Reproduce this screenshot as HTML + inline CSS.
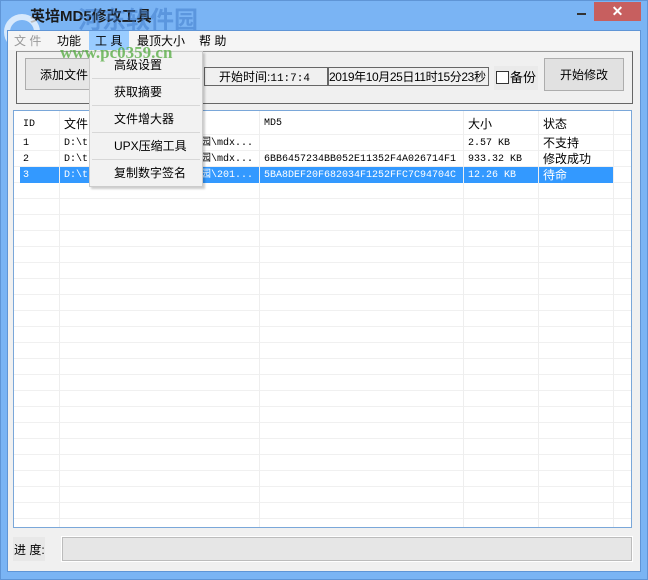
<!DOCTYPE html>
<html><head><meta charset="utf-8"><style>
*{margin:0;padding:0;box-sizing:border-box}
body{width:648px;height:580px;background:#7ab4f4;position:relative;overflow:hidden;font-family:"Liberation Sans","Noto Sans CJK SC",sans-serif;font-size:12px;color:#000;white-space:nowrap}
.a{position:absolute;line-height:14px}
.mono{font-family:"Liberation Mono","Noto Sans CJK SC",monospace;font-size:10px}
</style></head><body>
<div class="a" style="left:0;top:0;width:648px;height:580px;border:1px solid #5f95d6"></div>
<div class="a" style="left:30px;top:10px;font-size:15px;font-weight:bold;color:#1a1a1a">英培MD5修改工具</div>
<div class="a" style="left:78px;top:8px;font-size:24px;line-height:26px;font-weight:bold;color:rgba(60,120,200,0.5)">河东软件园</div>
<div class="a" style="left:4px;top:14px;width:36px;height:36px;border-radius:50%;border:6px solid rgba(255,255,255,0.7)"></div>
<div class="a" style="left:594px;top:2px;width:47px;height:19px;background:#c75f5f;color:#fff;text-align:center;font-size:14px;line-height:19px;font-weight:bold">✕</div>
<div class="a" style="left:577px;top:13px;width:9px;height:2px;background:#333"></div>
<!-- client -->
<div class="a" style="left:7px;top:30px;width:634px;height:542px;background:#f0f0f0;border:1px solid #5f95d6"></div>
<div class="a" style="left:8px;top:31px;width:632px;height:19px;background:#f5f5f5"></div>
<div class="a" style="left:14px;top:34px;color:#999">文 件</div>
<div class="a" style="left:57px;top:34px">功能</div>
<div class="a" style="left:89px;top:31px;width:40px;height:19px;background:#99ccff"></div>
<div class="a" style="left:95px;top:34px">工 具</div>
<div class="a" style="left:137px;top:34px">最顶大小</div>
<div class="a" style="left:199px;top:34px">帮 助</div>
<!-- group -->
<div class="a" style="left:16px;top:51px;width:617px;height:53px;border:1px solid #666;border-top-color:#999"></div>
<div class="a" style="left:25px;top:58px;width:66px;height:32px;border:1px solid #adadad;background:#e6e6e6;padding:9px 0 0 14px">添加文件</div>
<div class="a" style="left:204px;top:67px;width:124px;height:19px;border:1px solid #666;padding:2px 0 0 14px">开始时间:<span class="mono" style="font-size:11px">11:7:4</span></div>
<div class="a" style="left:328px;top:67px;width:161px;height:19px;border:1px solid #666;padding:2px 0 0 0;letter-spacing:-0.4px">2019年10月25日11时15分23秒</div>
<div class="a" style="left:494px;top:66px;width:44px;height:24px;background:#eaeaea"></div>
<div class="a" style="left:496px;top:71px;width:13px;height:13px;border:1px solid #333;background:#fff"></div>
<div class="a" style="left:510px;top:71px;font-size:13px">备份</div>
<div class="a" style="left:544px;top:58px;width:80px;height:33px;border:1px solid #adadad;background:#e1e1e1;padding:9px 0 0 15px">开始修改</div>
<!-- list -->
<div class="a" style="left:13px;top:110px;width:619px;height:418px;border:1px solid #7aa7d9;background:#fff"></div>
<div class="a" style="left:14px;top:134px;width:617px;height:393px;background:repeating-linear-gradient(to bottom,#f0f0f0 0,#f0f0f0 1px,#fff 1px,#fff 16px)"></div>
<div class="a" style="left:20px;top:167px;width:593px;height:16px;background:#3399ff"></div>
<div class="a" style="left:59px;top:111px;width:1px;height:416px;background:#eee"></div>
<div class="a" style="left:259px;top:111px;width:1px;height:416px;background:#eee"></div>
<div class="a" style="left:463px;top:111px;width:1px;height:416px;background:#eee"></div>
<div class="a" style="left:538px;top:111px;width:1px;height:416px;background:#eee"></div>
<div class="a" style="left:613px;top:111px;width:1px;height:416px;background:#eee"></div>
<div class="a mono" style="left:23px;top:118px">ID</div>
<div class="a" style="left:64px;top:117px">文件</div>
<div class="a mono" style="left:264px;top:117px">MD5</div>
<div class="a" style="left:468px;top:117px">大小</div>
<div class="a" style="left:543px;top:117px">状态</div>
<div class="a mono" style="left:23px;top:137px">1</div>
<div class="a mono" style="left:64px;top:137px">D:\t</div>
<div class="a mono" style="left:201px;top:137px">园\mdx...</div>
<div class="a mono" style="left:468px;top:137px">2.57 KB</div>
<div class="a" style="left:543px;top:136px">不支持</div>
<div class="a mono" style="left:23px;top:153px">2</div>
<div class="a mono" style="left:64px;top:153px">D:\t</div>
<div class="a mono" style="left:201px;top:153px">园\mdx...</div>
<div class="a mono" style="left:264px;top:153px">6BB6457234BB052E11352F4A026714F1</div>
<div class="a mono" style="left:468px;top:153px">933.32 KB</div>
<div class="a" style="left:543px;top:152px">修改成功</div>
<div class="a mono" style="left:23px;top:169px;color:#fff">3</div>
<div class="a mono" style="left:64px;top:169px;color:#fff">D:\t</div>
<div class="a mono" style="left:201px;top:169px;color:#fff">园\201...</div>
<div class="a mono" style="left:264px;top:169px;color:#fff">5BA8DEF20F682034F1252FFC7C94704C</div>
<div class="a mono" style="left:468px;top:169px;color:#fff">12.26 KB</div>
<div class="a" style="left:543px;top:168px;color:#fff">待命</div>
<!-- dropdown -->
<div class="a" style="left:89px;top:51px;width:114px;height:136px;background:#f2f2f2;border:1px solid #ccc;box-shadow:2px 2px 2px rgba(0,0,0,.2)"></div>
<div class="a" style="left:114px;top:58px">高级设置</div>
<div class="a" style="left:92px;top:78px;width:108px;height:1px;background:#d7d7d7"></div>
<div class="a" style="left:114px;top:85px">获取摘要</div>
<div class="a" style="left:92px;top:105px;width:108px;height:1px;background:#d7d7d7"></div>
<div class="a" style="left:114px;top:112px">文件增大器</div>
<div class="a" style="left:92px;top:132px;width:108px;height:1px;background:#d7d7d7"></div>
<div class="a" style="left:114px;top:139px">UPX压缩工具</div>
<div class="a" style="left:92px;top:159px;width:108px;height:1px;background:#d7d7d7"></div>
<div class="a" style="left:114px;top:166px">复制数字签名</div>
<div class="a" style="left:60px;top:44px;font-size:17px;line-height:18px;font-weight:bold;color:rgba(80,170,60,0.75);font-family:'Liberation Serif',serif">www.pc0359.cn</div>
<!-- progress -->
<div class="a" style="left:13px;top:537px;width:32px;height:24px;background:#e8e8e8"></div>
<div class="a" style="left:14px;top:543px">进 度:</div>
<div class="a" style="left:62px;top:537px;width:570px;height:24px;border:1px solid #bcbcbc;background:#e6e6e6;box-shadow:0 0 0 1px #fff"></div>
</body></html>
